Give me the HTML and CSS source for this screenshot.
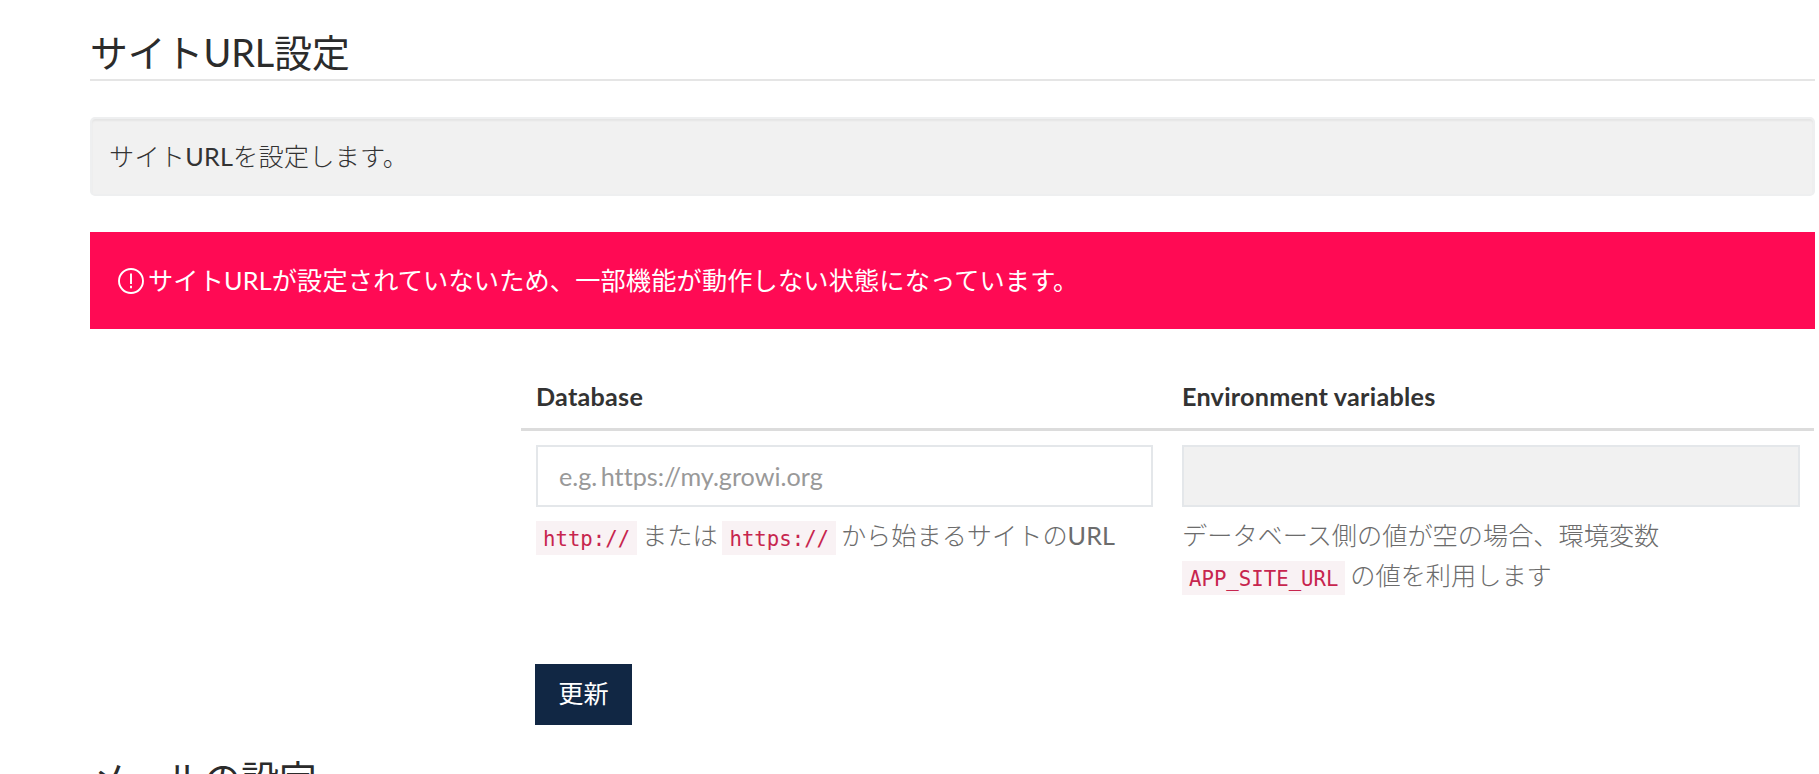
FILE: index.html
```
<!DOCTYPE html>
<html lang="ja">
<head>
<meta charset="utf-8">
<title>サイトURL設定</title>
<link rel="stylesheet" href="styles.css">
</head>
<body>
<main class="settings">
  <h2 class="section-title">サイトURL設定</h2>
  <p class="well">サイト<span class="latin">URL</span>を設定します。</p>
  <div class="alert">
    <svg class="alert-icon" viewBox="0 0 26 26" fill="none" stroke="currentColor" stroke-width="1.9">
      <circle cx="13" cy="13" r="12"/>
      <path d="M13 5.5v10.5M13 17.7v2.6"/>
    </svg>
    <span class="alert-text">サイトURLが設定されていないため、一部機能が動作しない状態になっています。</span>
  </div>
  <div class="table">
    <div class="th">Database</div>
    <div class="th">Environment variables</div>
    <div class="td">
      <input class="field" type="text" placeholder="e.g. https://my.growi.org">
      <p class="help"><code>http://</code> または <code>https://</code> から始まるサイトの<span class="latin">URL</span></p>
    </div>
    <div class="td">
      <input class="field" type="text" readonly>
      <p class="help">データベース側の値が空の場合、環境変数<br><code>APP_SITE_URL</code> の値を利用します</p>
    </div>
  </div>
  <button class="submit" type="button">更新</button>
  <h2 class="section-title">メールの設定</h2>
</main>
</body>
</html>
```
FILE: styles.css
```
* { box-sizing: border-box; }
html, body { height: 100%; }
body {
  margin: 0;
  overflow: hidden;
  background: #fff;
  color: #333;
  font-family: Lato, "Noto Sans CJK JP", sans-serif;
  font-size: 25.2px;
  font-weight: 400;
  font-variant-ligatures: none;
  line-height: 40px;
}
.settings {
  display: flex;
  flex-direction: column;
  padding: 26px 4px 0 90px;
}
.section-title {
  flex: none;
  margin: 0;
  height: 55px;
  border-bottom: 2px solid #e5e5e5;
  color: #2b2b2b;
  font-size: 37.8px;
  font-weight: 400;
  line-height: 53px;
}
.latin { font-weight: 400; }
.well {
  margin: 36px 0;
  height: 79px;
  padding: 17px 18px 0 17px;
  border: 2px solid #eeeff0;
  border-radius: 5px;
  background: #f1f1f1;
  box-shadow: inset 0 2px 2px rgba(0, 0, 0, .05);
  font-weight: 300;
  letter-spacing: .2px;
}
.alert {
  display: flex;
  align-items: center;
  height: 97px;
  padding-left: 28px;
  gap: 4px;
  background: #ff0a54;
  color: #fff;
}
.alert-icon { width: 26px; height: 26px; }
.alert-text {
  padding-bottom: 1px;
  letter-spacing: .16px;
}
.table {
  display: grid;
  grid-template-columns: 646px 1fr;
  margin: 34px 1px 0 431px;
}
.th {
  height: 68px;
  padding: 13px 15px 0;
  border-bottom: 3px solid #dcdcdc;
  font-weight: 700;
  letter-spacing: .24px;
}
.td { padding: 14px 14px 0 15px; }
.field {
  display: block;
  width: 100%;
  height: 62px;
  padding: 0 21px;
  border: 2px solid #e4e7ea;
  border-radius: 0;
  background: #fff;
  color: #565656;
  font: inherit;
  font-variant-ligatures: none;
  word-spacing: -3px;
  outline: none;
}
.field[readonly] { background: #f1f1f1; }
.field::placeholder { color: #999; opacity: 1; }
.help {
  margin: 8px 0 0;
  color: #6c6c6c;
  font-weight: 300;
  white-space: nowrap;
  word-spacing: -2px;
}
code {
  display: inline-block;
  height: 34px;
  padding: 0 7px;
  background: #f9f2f4;
  color: #c7254e;
  font-family: "DejaVu Sans Mono", monospace;
  font-size: 20.7px;
  font-weight: 400;
  line-height: 36px;
  vertical-align: -1px;
}
.submit {
  align-self: flex-start;
  width: 97px;
  height: 61px;
  margin: 69px 0 27px 445px;
  padding: 0 0 3px;
  border: 0;
  background: #112744;
  color: #fff;
  font: inherit;
}
```
